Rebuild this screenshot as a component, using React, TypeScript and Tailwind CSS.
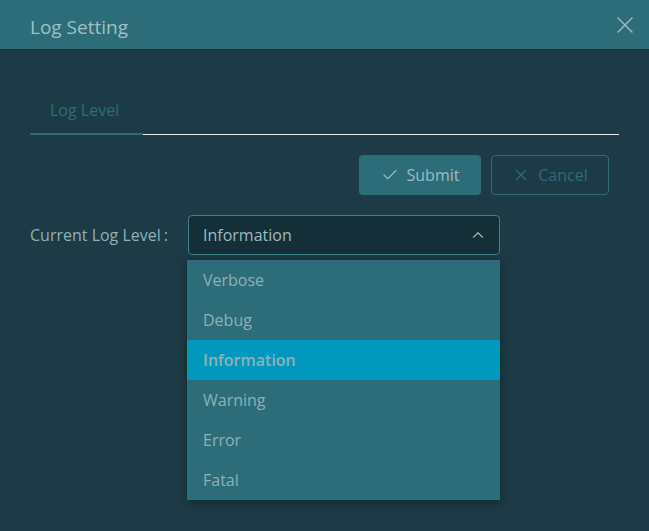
import React from "react";
import { Check, X, ChevronUp } from "lucide-react";

const levels = ["Verbose", "Debug", "Information", "Warning", "Error", "Fatal"];

const App: React.FC = () => {
  const current = "Information";

  return (
    <div
      className="w-[649px] h-[531px] bg-[#1c3b46] flex flex-col overflow-hidden"
      style={{ fontFamily: '"Open Sans", "Noto Sans", sans-serif' }}
    >
      {/* Header */}
      <div className="h-[50px] bg-[#2c6d79] border-b border-[#183640] flex items-center justify-between pl-[30px] pr-[10px] shrink-0">
        <span className="text-[19px] text-[#a0c0c4] pt-[5px]">Log Setting</span>
        <X size={28} strokeWidth={1.2} className="text-[#a0c0c4]" />
      </div>

      {/* Body */}
      <div className="flex flex-col px-[30px] pt-[48px] relative">
        {/* Tabs */}
        <div className="flex items-end">
          <div className="w-[113px] flex flex-col">
            <span className="text-[16px] text-[#2c6d79] pl-[20px] pb-[11px]">Log Level</span>
            <div className="h-[2px] bg-[#2c6d79]" />
          </div>
          <div className="flex-1 h-[1px] bg-[#e6eef0]" />
        </div>

        {/* Buttons */}
        <div className="flex justify-end gap-[10px] mt-[20px] pr-[10px]">
          <button className="w-[122px] h-[40px] rounded-[4px] bg-[#2c6d79] flex items-center justify-center gap-[8px] text-[16px] text-[#9cbcc0]">
            <Check size={18} strokeWidth={1.5} />
            <span>Submit</span>
          </button>
          <button className="w-[118px] h-[40px] rounded-[4px] border border-[#2c6d79] flex items-center justify-center gap-[8px] text-[16px] text-[#2c6d79]">
            <X size={18} strokeWidth={1.5} />
            <span>Cancel</span>
          </button>
        </div>

        {/* Current level */}
        <div className="flex items-center mt-[20px]">
          <span className="w-[158px] text-[16px] text-[#8fb1b6]">
            Current Log Level<span className="ml-[3px]">:</span>
          </span>
          <div className="relative w-[312px]">
            <div className="h-[40px] rounded-[4px] bg-[#152f39] border border-[#40808a] flex items-center justify-between pl-[14px] pr-[12px]">
              <span className="text-[16px] text-[#9cbcc0]">{current}</span>
              <ChevronUp size={18} strokeWidth={1.5} className="text-[#9cbcc0]" />
            </div>
            {/* Dropdown */}
            <div className="absolute left-[-1px] top-[45px] w-[313px] bg-[#2c6d79] shadow-[0_2px_10px_rgba(0,0,0,0.35)] flex flex-col">
              {levels.map((l) => (
                <div
                  key={l}
                  className={
                    l === current
                      ? "h-[40px] flex items-center pl-[16px] bg-[#0099bd] text-[16px] font-semibold text-[#8fb1b6]"
                      : "h-[40px] flex items-center pl-[16px] text-[16px] text-[#8fb1b6]"
                  }
                >
                  {l}
                </div>
              ))}
            </div>
          </div>
        </div>
      </div>
    </div>
  );
};

export default App;
